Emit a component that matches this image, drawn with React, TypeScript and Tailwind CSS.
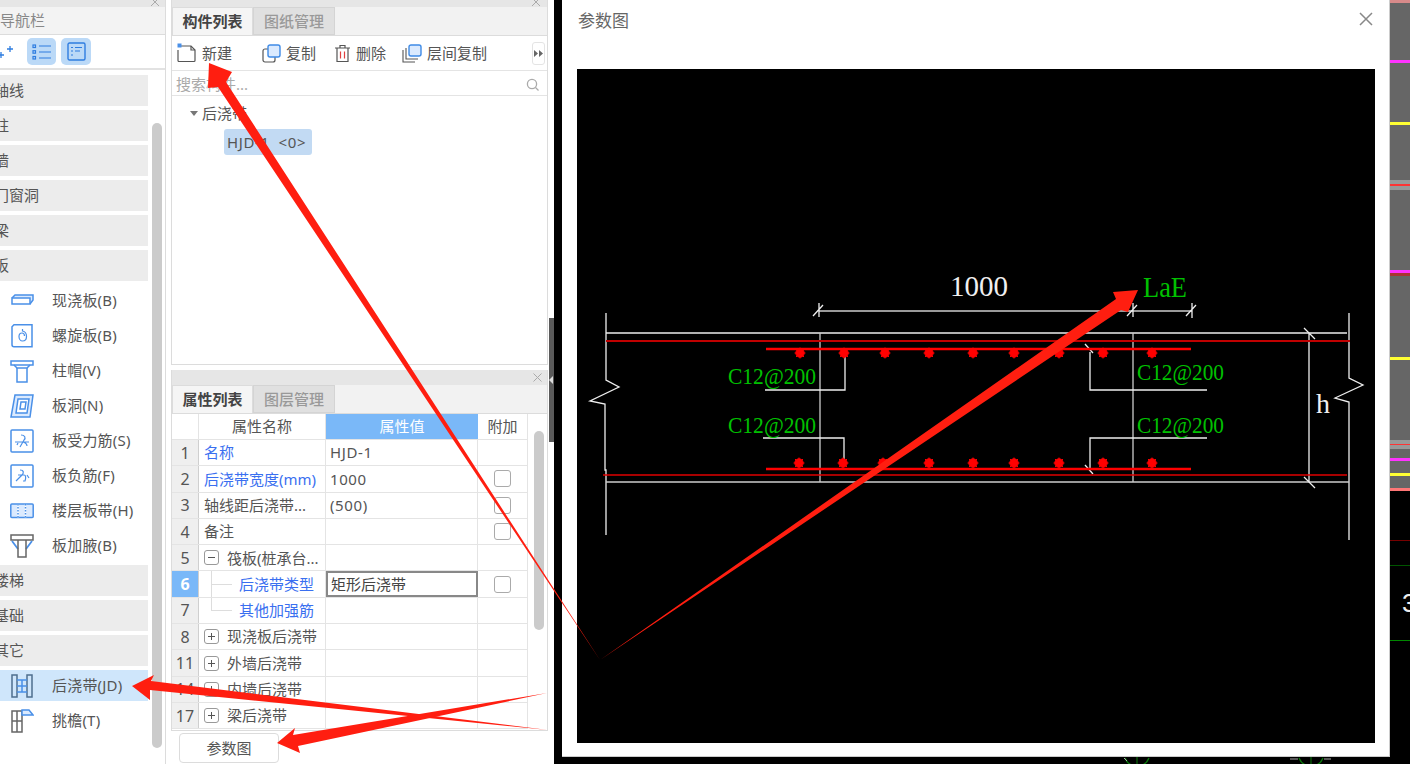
import React from "react";

const BLUE = "#4a90e8";

const Ic = ({ children }: { children: React.ReactNode }) => (
  <svg width="24" height="24" viewBox="0 0 24 24" fill="none" stroke={BLUE} strokeWidth="1.5" className="shrink-0">
    {children}
  </svg>
);

const icons: Record<string, React.ReactNode> = {
  slab: (
    <Ic>
      <path d="M2 9l3-3h18v5l-3 4" fill="#dbeafe" />
      <path d="M2 9h18v6H2z" fill="#fff" />
    </Ic>
  ),
  spiral: (
    <Ic>
      <path d="M4 0.8h18v22H4a2 2 0 0 1-2-2V2.8z" />
      <path d="M12.5 5v2c3 .5 4 3 4 5.500 0 3-2 4.500-4 4.500s-3.500-2-3.500-4.500 1.500-3.500 3-3.500 2.500 1 2.500 3" strokeWidth="1.2" />
    </Ic>
  ),
  cap: (
    <Ic>
      <path d="M1 2h22v4H1z" />
      <path d="M4 6l3 3h10l3-3" />
      <path d="M7 9v14h10V9" />
    </Ic>
  ),
  hole: (
    <Ic>
      <path d="M5 1h18l-3 22H1z" fill="#dbeafe" />
      <path d="M8 5h11l-2 14H6z" fill="#fff" />
      <path d="M11 8h5l-1 7h-5z" />
    </Ic>
  ),
  rebar: (
    <Ic>
      <rect x="1" y="1" width="22" height="22" rx="1" />
      <path d="M5 13h14M11 6c4 0 5 3 3 5l-4 7M12 13c3 0 5 2 5 4M7 16l1-2" strokeWidth="1.2" />
    </Ic>
  ),
  neg: (
    <Ic>
      <rect x="1" y="1" width="22" height="22" rx="1" />
      <path d="M10 6c4 0 4 3 2 5l-6 6M8 11h6c2 0 2 3 1 6l-2 0M17 11l2 3" strokeWidth="1.2" />
    </Ic>
  ),
  band: (
    <Ic>
      <rect x="0.8" y="5" width="22.400" height="13.500" rx="1" fill="#dbeafe" />
      <path d="M8 5v13.500M15.500 5v13.500" stroke="#fff" strokeWidth="1.500" />
      <path d="M8 5v13.500M15.500 5v13.500" strokeDasharray="1.500 1.500" />
    </Ic>
  ),
  haunch: (
    <Ic>
      <path d="M1 1h22v5H1z" stroke="#666" />
      <path d="M2 7l6 8M22 7l-6 8" strokeWidth="1.800" />
      <path d="M8 6v17h8V6" stroke="#666" />
    </Ic>
  ),
  post: (
    <Ic>
      <path d="M2 1h5v22H2zM17 1h5v22h-5z" stroke="#4f6f8f" />
      <path d="M7 6h10M7 12h10M7 18h10M12 6v12" />
    </Ic>
  ),
  eave: (
    <Ic>
      <path d="M2 2h10v21H2zM2 12h10M7 12v11M7 2v10" stroke="#666" />
      <path d="M12 1h7l4 5H12z" fill="#dbeafe" />
    </Ic>
  ),
};

const SideHead = ({ label }: { label: string }) => (
  <div className="h-[31px] mb-[4px] bg-[#ececec] flex items-center overflow-hidden">
    <span className="-ml-[6px] whitespace-nowrap">{label}</span>
  </div>
);

const SideItem = ({ icon, label, active }: { icon: string; label: string; active?: boolean }) => (
  <div className={`h-[31px] mb-[4px] flex items-center pl-[10px] gap-[18px] whitespace-nowrap ${active ? "bg-[#cfe6fb]" : ""}`}>
    {icons[icon]}
    <span className="tracking-[0.2px]">{label}</span>
  </div>
);

const Sidebar = () => (
  <div className="w-[166px] shrink-0 border-r border-[#dcdcdc] flex flex-col h-full text-[15px] text-[#555]">
    <div className="h-[7px] bg-[#e6e6e6] flex justify-end pr-[5px] overflow-hidden">
      <svg width="9" height="7" viewBox="0 0 9 7" stroke="#aaa" fill="none"><path d="M0 -2l8 8M8 -2l-8 8" /></svg>
    </div>
    <div className="h-[28px] bg-[#f3f3f3] border-b border-[#dcdcdc] flex items-center text-[#888]">导航栏</div>
    <div className="h-[35px] border-b-2 border-[#e2e2e2] flex items-center">
      <svg width="14" height="16" viewBox="0 0 14 16" stroke="#2f7de0" strokeWidth="1.3">
        <path d="M-2 11h6M1 8v6M7 5h6M10 2v6" />
      </svg>
      <div className="ml-[13px] w-[29px] h-[27px] rounded-[5px] bg-[#bbd9f7] flex items-center justify-center">
        <svg width="20" height="16" viewBox="0 0 20 16" fill="none" stroke="#2f7de0" strokeWidth="1.2">
          <path d="M7 2h12M7 8h12M7 14h12" />
          <rect x="1" y="1" width="2.5" height="2.5" /><rect x="1" y="6.7" width="2.5" height="2.5" /><rect x="1" y="12.5" width="2.5" height="2.5" />
        </svg>
      </div>
      <div className="ml-[5px] w-[30px] h-[27px] rounded-[5px] bg-[#bbd9f7] flex items-center justify-center">
        <svg width="19" height="19" viewBox="0 0 19 19" fill="none" stroke="#2f7de0" strokeWidth="1.2">
          <rect x="1" y="1" width="17" height="17" rx="1.5" strokeWidth="1.4" />
          <path d="M4 5.5h2M8 5.5h7M4 9h2M8 9h5M4 13h2" />
        </svg>
      </div>
    </div>
    <div className="flex flex-1 min-h-0">
      <div className="w-[148px] pt-[5px] shrink-0">
        <SideHead label="轴线" />
        <SideHead label="柱" />
        <SideHead label="墙" />
        <SideHead label="门窗洞" />
        <SideHead label="梁" />
        <SideHead label="板" />
        <SideItem icon="slab" label="现浇板(B)" />
        <SideItem icon="spiral" label="螺旋板(B)" />
        <SideItem icon="cap" label="柱帽(V)" />
        <SideItem icon="hole" label="板洞(N)" />
        <SideItem icon="rebar" label="板受力筋(S)" />
        <SideItem icon="neg" label="板负筋(F)" />
        <SideItem icon="band" label="楼层板带(H)" />
        <SideItem icon="haunch" label="板加腋(B)" />
        <SideHead label="楼梯" />
        <SideHead label="基础" />
        <SideHead label="其它" />
        <SideItem icon="post" label="后浇带(JD)" active />
        <SideItem icon="eave" label="挑檐(T)" />
      </div>
      <div className="ml-[4px] mt-[53px] w-[10px] h-[625px] rounded-full bg-[#cbcbcb]" />
    </div>
  </div>
);

const Tabs = ({ a, b }: { a: string; b: string }) => (
  <div className="h-[29px] bg-[#f2f2f2] border-b border-[#dcdcdc] flex text-[15px] shrink-0">
    <div className="w-[81px] border border-[#dcdcdc] border-b-0 bg-[#f5f5f5] font-bold text-[#444] flex items-center justify-center">{a}</div>
    <div className="w-[82px] border border-[#d4d4d4] bg-[#e0e0e0] text-[#999] font-medium flex items-center justify-center">{b}</div>
  </div>
);

const ToolBtn = ({ icon, label, w }: { icon: React.ReactNode; label: string; w: string }) => (
  <div className={`flex items-center ${w} whitespace-nowrap`}>
    {icon}
    <span>{label}</span>
  </div>
);

const Check = () => <div className="w-[17px] h-[17px] rounded-[3px] border border-[#aaa] bg-white" />;

type Row = {
  n: number;
  name: string;
  blue?: boolean;
  mark?: "+" | "-";
  child?: "mid" | "end";
  value?: string;
  check?: boolean;
  sel?: boolean;
};

const rows: Row[] = [
  { n: 1, name: "名称", blue: true, value: "HJD-1" },
  { n: 2, name: "后浇带宽度(mm)", blue: true, value: "1000", check: true },
  { n: 3, name: "轴线距后浇带...", value: "(500)", check: true },
  { n: 4, name: "备注", check: true },
  { n: 5, name: "筏板(桩承台...", mark: "-" },
  { n: 6, name: "后浇带类型", blue: true, child: "mid", value: "矩形后浇带", check: true, sel: true },
  { n: 7, name: "其他加强筋", blue: true, child: "end" },
  { n: 8, name: "现浇板后浇带", mark: "+" },
  { n: 11, name: "外墙后浇带", mark: "+" },
  { n: 14, name: "内墙后浇带", mark: "+" },
  { n: 17, name: "梁后浇带", mark: "+" },
];

const TableRow = ({ r }: { r: Row }) => (
  <div className="flex h-[26.3px] border-b border-[#e4e4e4] box-border">
    <div className={`w-[27px] shrink-0 flex items-center justify-center border-r border-[#cfcfcf] text-[16px] ${r.sel ? "bg-[#7ab8f8] text-white font-bold" : "bg-[#efefef]"}`}>{r.n}</div>
    <div className={`w-[127px] shrink-0 relative flex items-center border-r border-[#e4e4e4] whitespace-nowrap overflow-hidden ${r.blue ? "text-[#3a6ff0]" : ""} ${r.child ? "pl-[40px]" : "pl-[5px]"}`}>
      {r.child && (
        <>
          <div className={`absolute left-[12px] top-0 w-px bg-[#ddd] ${r.child === "mid" ? "h-full" : "h-1/2"}`} />
          <div className="absolute left-[12px] top-1/2 w-[21px] h-px bg-[#ddd]" />
        </>
      )}
      {r.mark && (
        <div className="w-[15px] h-[15px] mr-[8px] shrink-0 rounded-[3px] border border-[#999] flex items-center justify-center">
          <svg width="9" height="9" viewBox="0 0 9 9" stroke="#555"><path d={r.mark === "+" ? "M1 4.5h7M4.5 1v7" : "M1 4.5h7"} /></svg>
        </div>
      )}
      <span>{r.name}</span>
    </div>
    <div className={`w-[152px] shrink-0 flex items-center whitespace-nowrap ${r.sel ? "border-2 border-[#888] pl-[3px] text-[#444]" : "border-r border-[#e4e4e4] pl-[4px] tracking-[0.6px]"}`}>{r.value}</div>
    <div className="w-[50px] shrink-0 flex items-center justify-center border-r border-[#e4e4e4]">{r.check && <Check />}</div>
  </div>
);

const PanelTop = () => (
  <div className="w-[377px] h-[365px] border-x border-b border-[#dcdcdc] flex flex-col shrink-0">
    <div className="h-[7px] bg-[#e6e6e6] flex justify-end pr-[6px] overflow-hidden shrink-0">
      <svg width="9" height="7" viewBox="0 0 9 7" stroke="#aaa" fill="none"><path d="M0 -2l8 8M8 -2l-8 8" /></svg>
    </div>
    <Tabs a="构件列表" b="图纸管理" />
    <div className="h-[35px] border-b border-[#e4e4e4] flex items-center pl-[5px] text-[15px] text-[#555] shrink-0">
      <ToolBtn
        w="w-[85px]"
        label="新建"
        icon={
          <svg width="20" height="20" viewBox="0 0 20 20" fill="none" stroke="#555" strokeWidth="1.2" className="mr-[5px]">
            <path d="M4 3h10l4 4v10.5a1 1 0 0 1-1 1H2a1 1 0 0 1-1-1V7" />
            <path d="M14 3v4h4" />
            <rect x="0.5" y="0.5" width="4" height="4" fill="#4a90e8" stroke="none" />
          </svg>
        }
      />
      <ToolBtn
        w="w-[72px]"
        label="复制"
        icon={
          <svg width="19" height="19" viewBox="0 0 19 19" fill="none" className="mr-[5px]">
            <rect x="1" y="5" width="12" height="13" rx="2" stroke="#555" strokeWidth="1.2" />
            <rect x="6" y="1" width="12" height="12" rx="2" fill="#dbeafe" stroke="#3f8be6" strokeWidth="1.4" />
          </svg>
        }
      />
      <ToolBtn
        w="w-[68px]"
        label="删除"
        icon={
          <svg width="17" height="19" viewBox="0 0 17 19" fill="none" stroke="#555" strokeWidth="1.2" className="mr-[5px]">
            <path d="M1 4h15M6 4V1.5h5V4M3 4v13.5h11V4" />
            <path d="M6.5 7.5v7M10.5 7.5v7" stroke="#e04040" />
          </svg>
        }
      />
      <ToolBtn
        w="w-[130px]"
        label="层间复制"
        icon={
          <svg width="20" height="19" viewBox="0 0 20 19" fill="none" className="mr-[5px]">
            <path d="M1 6v12h12M4 4v11h12" stroke="#555" strokeWidth="1.1" />
            <rect x="7" y="1" width="12" height="11" rx="2" fill="#dbeafe" stroke="#3f8be6" strokeWidth="1.4" />
          </svg>
        }
      />
      <div className="w-[13px] h-[23px] rounded-[3px] border border-[#e4e4e4] flex items-center justify-center">
        <svg width="9" height="7" viewBox="0 0 9 7" fill="#666"><path d="M0 0l4 3.5L0 7zM5 0l4 3.5L5 7z" /></svg>
      </div>
    </div>
    <div className="h-[25px] pt-[2px] border-b border-[#e4e4e4] flex items-center justify-between pl-[4px] pr-[8px] text-[15px] text-[#aaa] shrink-0">
      <span>搜索构件...</span>
      <svg width="13" height="13" viewBox="0 0 13 13" fill="none" stroke="#aaa" strokeWidth="1.3"><circle cx="6" cy="6" r="4.6" /><path d="M9.5 9.5l3 3" /></svg>
    </div>
    <div className="flex-1 text-[15px] text-[#555]">
      <div className="flex items-center h-[26px] mt-[4px] pl-[18px]">
        <svg width="8" height="5" viewBox="0 0 8 5" fill="#777" className="mr-[4px]"><path d="M0 0h8L4 5z" /></svg>
        <span>后浇带</span>
      </div>
      <div className="mt-[3px] ml-[52px] w-[88px] h-[26px] rounded-[3px] bg-[#c2daf3] flex items-center pl-[3px] whitespace-nowrap tracking-[0.6px]">HJD-1&nbsp;&nbsp;&lt;0&gt;</div>
    </div>
  </div>
);

const PanelBottom = () => (
  <div className="w-[377px] h-[361px] mt-[5px] border-x border-b border-[#dcdcdc] flex flex-col shrink-0">
    <div className="h-[15px] bg-[#e6e6e6] flex items-center justify-end pr-[5px] shrink-0">
      <svg width="9" height="9" viewBox="0 0 9 9" stroke="#aaa" fill="none"><path d="M0.5 0.5l8 8M8.5 0.5l-8 8" /></svg>
    </div>
    <Tabs a="属性列表" b="图层管理" />
    <div className="flex flex-1 min-h-0 text-[15px] text-[#555]">
      <div className="w-[356px] shrink-0">
        <div className="flex h-[26px] border-b border-[#e4e4e4]">
          <div className="w-[27px] border-r border-[#e4e4e4]" />
          <div className="w-[127px] flex items-center justify-center border-r border-[#e4e4e4]">属性名称</div>
          <div className="w-[152px] flex items-center justify-center bg-[#7ab8f8] text-white">属性值</div>
          <div className="w-[50px] flex items-center justify-center border-r border-[#e4e4e4]">附加</div>
        </div>
        {rows.map((r) => (
          <TableRow key={r.n} r={r} />
        ))}
      </div>
      <div className="ml-[6px] mt-[17px] w-[10px] h-[199px] rounded-full bg-[#cbcbcb]" />
    </div>
  </div>
);

const Middle = () => (
  <div className="w-[388px] shrink-0 flex h-full">
    <div className="w-[383px] pl-[5px] flex flex-col">
      <PanelTop />
      <PanelBottom />
      <div className="ml-[8px] mt-[2px] w-[100px] h-[30px] rounded-[4px] border border-[#dcdcdc] flex items-center justify-center text-[15px] text-[#555]">参数图</div>
    </div>
    <div className="mt-[318px] w-[5px] h-[124px] bg-[#5a5a5a] flex items-center overflow-hidden">
      <svg width="5" height="8" viewBox="0 0 5 8" fill="#ddd"><path d="M4 0v8L0 4z" /></svg>
    </div>
  </div>
);

const DOTS_X_T = [800, 844, 885, 929, 973, 1014, 1059, 1103, 1152];
const DOTS_X_B = [799, 843, 883, 929, 973, 1014, 1059, 1103, 1152];

const Dot = ({ x, y }: { x: number; y: number }) => (
  <g fill="#f00" stroke="#f00">
    <circle cx={x} cy={y} r="4.2" />
    <path d={`M${x - 5.5} ${y}h11M${x} ${y - 5.5}v11M${x - 4} ${y - 4}l8 8M${x + 4} ${y - 4}l-8 8`} strokeWidth="1" />
  </g>
);

const Drawing = () => (
  <svg width="798" height="674" viewBox="577 69 798 674" className="block" fill="none">
    <g stroke="#eeeeee" strokeWidth="1.3">
      <path d="M606 313V380L619 387L590 401L605 404V470H606V535" />
      <path d="M1349 313V378L1363 385L1335 398L1349 402V540" />
      <path d="M606 333H1347" strokeWidth="1.5" />
      <path d="M606 482H1349" stroke="#cccccc" />
      <path d="M820 333V482M1133 333V482" stroke="#cccccc" />
      <path d="M765 390H845V353M763 438H844V463" />
      <path d="M1207 390H1090V352M1207 438H1090V468" />
      <path d="M1085 344L1093 353M1085 465L1093 474" />
      <path d="M819 311H1192" stroke="#cccccc" />
      <path d="M819 303V317M813 316L823 305M1133 303V317M1127 316L1137 305M1192 303V318M1186 316L1196 305" />
      <path d="M1309 333V482M1304 328L1315 339M1304 477L1315 488" />
    </g>
    <path d="M606 341H1350" stroke="#c00000" strokeWidth="2" />
    <path d="M603 475H1347" stroke="#e00000" strokeWidth="1.6" />
    <path d="M766 349H1191M766 469H1191" stroke="#f00" strokeWidth="2.4" />
    {DOTS_X_T.map((x) => (
      <Dot key={x} x={x} y={353} />
    ))}
    {DOTS_X_B.map((x) => (
      <Dot key={x} x={x} y={463} />
    ))}
    <g fontFamily="'Liberation Serif', serif" fill="#00c000" fontSize="24">
      <text x="728" y="384" textLength="88" lengthAdjust="spacingAndGlyphs">C12@200</text>
      <text x="728" y="433" textLength="88" lengthAdjust="spacingAndGlyphs">C12@200</text>
      <text x="1137" y="380" textLength="87" lengthAdjust="spacingAndGlyphs">C12@200</text>
      <text x="1137" y="433" textLength="87" lengthAdjust="spacingAndGlyphs">C12@200</text>
      <text x="1143" y="297" fontSize="30" textLength="44" lengthAdjust="spacingAndGlyphs">LaE</text>
    </g>
    <g fontFamily="'Liberation Serif', serif" fill="#f0f0f0">
      <text x="950" y="296" fontSize="30" textLength="58" lengthAdjust="spacingAndGlyphs">1000</text>
      <text x="1316" y="413" fontSize="28">h</text>
    </g>
  </svg>
);

const stripes: [string, string][] = [
  ["h-[3px]", "bg-[#d88a8a]"], ["h-[57px]", "bg-[#666666]"], ["h-[3px]", "bg-[#ff33ff]"], ["h-[59px]", "bg-[#666666]"],
  ["h-[3px]", "bg-[#ffff33]"], ["h-[55px]", "bg-[#666666]"], ["h-[4px]", "bg-[#999999]"], ["h-[2px]", "bg-[#ff3333]"],
  ["h-[4px]", "bg-[#999999]"], ["h-[80px]", "bg-[#666666]"], ["h-[3px]", "bg-[#ff33ff]"], ["h-[3px]", "bg-[#aa3333]"],
  ["h-[81px]", "bg-[#666666]"], ["h-[3px]", "bg-[#ffff33]"], ["h-[80px]", "bg-[#666666]"], ["h-[4px]", "bg-[#999999]"],
  ["h-[1px]", "bg-[#ff3333]"], ["h-[4px]", "bg-[#999999]"], ["h-[9px]", "bg-[#666666]"], ["h-[3px]", "bg-[#ff33ff]"],
  ["h-[12px]", "bg-[#666666]"], ["h-[3px]", "bg-[#ffff33]"], ["h-[12px]", "bg-[#666666]"], ["h-[3px]", "bg-[#ff7777]"],
  ["h-[49px]", "bg-black"], ["h-[1px]", "bg-[#770000]"], ["h-[24px]", "bg-black"], ["h-[1px]", "bg-[#005500]"],
];

const RightCanvas = () => (
  <div className="flex-1 h-full bg-black flex flex-col overflow-hidden">
    {stripes.map(([h, c], i) => (
      <div key={i} className={`${h} ${c} shrink-0`} />
    ))}
    <div className="h-[74px] shrink-0 pl-[12px] pt-[20px] text-[26px] leading-[34px] text-[#eee] font-['Liberation_Sans',sans-serif]">3</div>
    <div className="h-[1px] bg-[#008800] shrink-0" />
  </div>
);

const Modal = () => (
  <div className="w-[828px] shrink-0 h-full bg-black">
    <div className="h-[757px] bg-white border-r border-b border-[#cccccc] flex flex-col px-[15px]">
      <div className="h-[69px] shrink-0 flex items-start justify-between text-[17px] text-[#666]">
        <span className="mt-[8px] ml-px">参数图</span>
        <svg width="14" height="14" viewBox="0 0 14 14" stroke="#888" strokeWidth="1.5" className="mt-[12px] mr-[1px]"><path d="M1 1l12 12M13 1L1 13" /></svg>
      </div>
      <div className="w-[798px] h-[674px] bg-black"><Drawing /></div>
    </div>
    <svg width="828" height="7" viewBox="562 757 828 7" fill="none" className="block">
      <path d="M1125 758a13 13 0 0 0 24 0M1299 758a13 13 0 0 0 24 0" stroke="#0a7a0a" strokeWidth="1.3" />
      <path d="M1137 757v7M1311 757v7" stroke="#0a7a0a" />
      <path d="M1290 759h8M1324 759h7M1124 758l3 3" stroke="#aaa" />
    </svg>
  </div>
);

const Arrows = () => (
  <svg width="1410" height="764" viewBox="0 0 1410 764" className="absolute inset-0 pointer-events-none" fill="#ff1e10">
    <polygon points="600,660 226,82 232,72 209,63 208,88 218,87" />
    <polygon points="600,660 1121,310 1128,312 1138,290 1113,292 1116,299" />
    <polygon points="132,686 154,675 151,681 548,730 150,690 150,700" />
    <polygon points="277,743 295,728 293,735 547,693 298,746 300,753" />
  </svg>
);

export default function App() {
  return (
    <div className="relative w-[1410px] h-[764px] overflow-hidden bg-white flex font-['Noto_Sans','Noto_Sans_CJK_SC',sans-serif]">
      <Sidebar />
      <Middle />
      <div className="w-[8px] h-full bg-black shrink-0" />
      <Modal />
      <RightCanvas />
      <Arrows />
    </div>
  );
}
